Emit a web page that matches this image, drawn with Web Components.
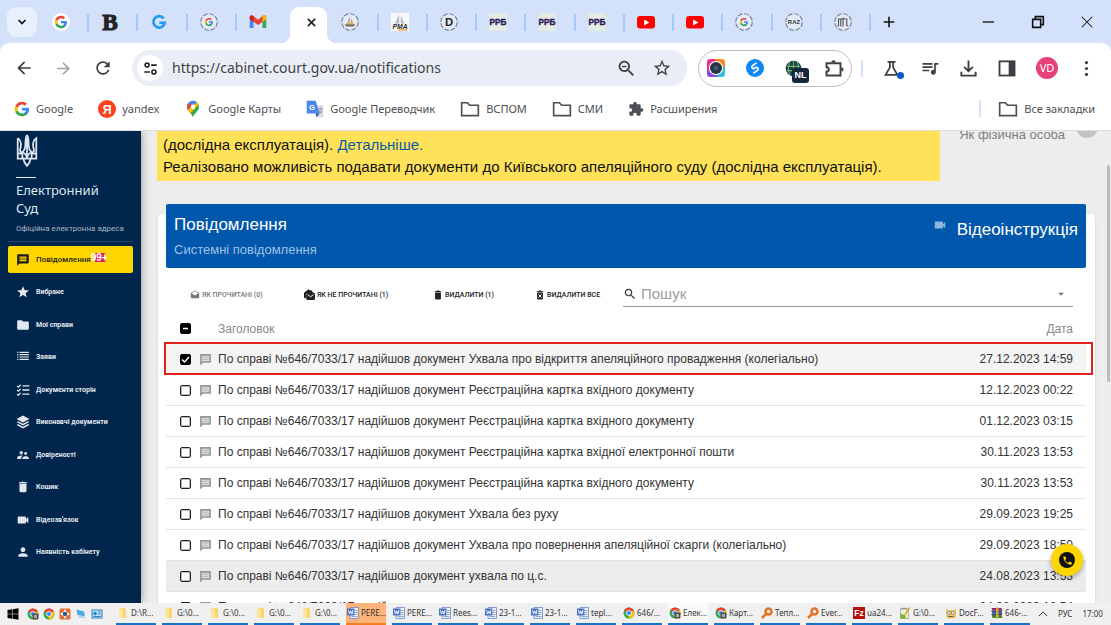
<!DOCTYPE html>
<html lang="uk">
<head>
<meta charset="utf-8">
<title>Електронний суд — Повідомлення</title>
<style>
  html, body { margin: 0; height: 100%; }
  body { display: flex; flex-direction: column; overflow: hidden; font-family: "Noto Sans", sans-serif; color: #3c4043; background: #d3e1fb; }
</style>
</head>
<body>
<browser-tabs></browser-tabs>
<browser-toolbar></browser-toolbar>
<bookmarks-bar></bookmarks-bar>
<court-app></court-app>
<task-bar></task-bar>

<script>
const p = (d, extra = '') => `<path d="${d}" ${extra}/>`;
const line = (d, w = 2) => `<path d="${d}" fill="none" stroke="currentColor" stroke-width="${w}"/>`;
const G = p('M22.56 12.25c0-.78-.07-1.53-.2-2.25H12v4.26h5.92c-.26 1.37-1.04 2.53-2.21 3.31v2.77h3.57c2.08-1.92 3.28-4.74 3.28-8.09z', 'fill="#4285f4"')
  + p('M12 23c2.97 0 5.46-.98 7.28-2.66l-3.57-2.77c-.98.66-2.23 1.06-3.71 1.06-2.86 0-5.29-1.93-6.16-4.53H2.18v2.84C3.99 20.53 7.7 23 12 23z', 'fill="#34a853"')
  + p('M5.84 14.09c-.22-.66-.35-1.36-.35-2.09s.13-1.43.35-2.09V7.07H2.18C1.43 8.55 1 10.22 1 12s.43 3.45 1.18 4.93l2.85-2.22.81-.62z', 'fill="#fbbc05"')
  + p('M12 5.38c1.62 0 3.06.56 4.21 1.64l3.15-3.15C17.45 2.09 14.97 1 12 1 7.7 1 3.99 3.47 2.18 7.07l3.66 2.84c.87-2.6 3.3-4.53 6.16-4.53z', 'fill="#ea4335"');
const ring = '<circle cx="12" cy="12" r="11" fill="#e4ebf7" stroke="#7c8594" stroke-width="1.6" stroke-dasharray="6.5 2.1"/>';
const label = (t, size, fill, font = 'Liberation Sans', y = 16, weight = 'bold', extra = '') => `<text x="12" y="${y}" text-anchor="middle" font-family="${font}, sans-serif" font-weight="${weight}" font-size="${size}" fill="${fill}" ${extra}>${t}</text>`;
const chrome = '<circle cx="12" cy="12" r="11" fill="#34a853"/><path d="M12 12 2.5 6.5A11 11 0 0 1 21.5 6.5z" fill="#ea4335"/><path d="M12 12 21.5 6.5A11 11 0 0 1 11 23z" fill="#fbbc05"/><circle cx="12" cy="12" r="5.5" fill="#fff"/><circle cx="12" cy="12" r="4.2" fill="#4285f4"/>';
const search = 'M15.5 14h-.79l-.28-.27C15.41 12.59 16 11.11 16 9.5 16 5.91 13.09 3 9.5 3S3 5.91 3 9.5 5.91 16 9.5 16c1.61 0 3.09-.59 4.23-1.57l.27.28v.79l5 4.99L20.49 19l-4.99-5zm-6 0C7.01 14 5 11.99 5 9.5S7.01 5 9.5 5 14 7.01 14 9.5 11.99 14 9.5 14z';
const drafts = 'M21.99 8c0-.72-.37-1.35-.94-1.7L12 1 2.95 6.3C2.38 6.65 2 7.28 2 8v10c0 1.1.9 2 2 2h16c1.1 0 2-.9 2-2l-.01-10zM12 13L3.74 7.84 12 3l8.26 4.84L12 13z';

const ICONS = {
  google: G,
  googleDisc: `<circle cx="12" cy="12" r="12" fill="#fff"/><g transform="translate(3 3) scale(.75)">${G}</g>`,
  googleRing: `${ring}<g transform="translate(6 6) scale(.5)">${G}</g>`,
  b: label('B', 31, '#222', 'Liberation Serif', 22, 'bold', 'stroke="#222" stroke-width="1.4"'),
  gBlue: '<path d="M18.200 7.300A7.600 7.600 0 1 0 19.600 13H12.500" fill="none" stroke="#1f9cf0" stroke-width="3.600"/>',
  gmail: '<path d="M1 20V5l5 4v11z" fill="#4285f4"/><path d="M18 20V9l5-4v15z" fill="#34a853"/><path d="M1 5.500C1 3 4 2.500 6 4l6 5 6-5c2-1.500 5-1 5 1.500V8l-11 8L1 8z" fill="#ea4335"/><path d="M18 4c2-1.500 5-1 5 1.500V8l-5 4z" fill="#fbbc05"/><path d="M1 8V5.500C1 4 3 3 4.500 3.300L6 5v7z" fill="#c5221f"/>',
  ship: `${ring}<path d="M5 15h14l-2 3H7z" fill="#666"/><path d="M12 4v9H8z" fill="#aab4bb"/><path d="M13 6l3 7h-3z" fill="#d69a66"/><path d="M7 14.500h10" stroke="#f08a1a" stroke-width="1.500"/>`,
  pma: '<path d="M0 0h24v24H0z" fill="#f8f8f8"/><path d="M11 2v12H5zM13 4l5 10h-5z" fill="#b8bcc4"/>' + label('PMA', 9, '#2b2b2b', 'Liberation Sans', 21, 'bold', 'font-style="italic"') + '<path d="M9 22.500h13" stroke="#e69b1c" stroke-width="1.500"/>',
  d: ring + label('D', 15, '#222', 'Liberation Sans', 17),
  rrb: '<path d="M0 0h24v24H0z" fill="#e3ebe3"/>' + label('РРБ', 11, '#2d1a5e', 'Liberation Sans', 16, 'bold', 'stroke="#2d1a5e" stroke-width=".5"'),
  youtube: '<rect x="0" y="4" width="24" height="16.500" rx="4" fill="#f00"/><path d="M9.500 8.500v8l7-4z" fill="#fff"/>',
  raz: ring + label('RAZ', 8, '#333', 'Liberation Sans', 15),
  itl: `${ring}<path d="M6 18V8h6M9 8v10M12 6v12M12 8h5v9h2" fill="none" stroke="#555" stroke-width="1.500"/>`,
  chevron: line('M5 8l7 7 7-7', 3.4),
  chevronUp: line('M2 17 12 7l10 10', 2.4),
  close: line('M4 4l16 16M20 4L4 20', 3.4),
  closeThin: line('M3 3l18 18M21 3L3 21', 1.8),
  minus: line('M4 12h17', 2),
  restore: line('M4 8h12v12H4zM8 8V4h12v12h-4', 2.4),
  plus: line('M12 4v16M4 12h16', 2.4),
  back: p('M20 11H7.83l5.59-5.59L12 4l-8 8 8 8 1.41-1.41L7.83 13H20v-2z'),
  forward: `<g transform="matrix(-1 0 0 1 24 0)">${p('M20 11H7.83l5.59-5.59L12 4l-8 8 8 8 1.41-1.41L7.83 13H20v-2z')}</g>`,
  reload: p('M17.65 6.35C16.2 4.9 14.21 4 12 4c-4.42 0-7.99 3.58-7.99 8s3.57 8 7.99 8c3.73 0 6.84-2.55 7.73-6h-2.08c-.82 2.33-3.04 4-5.65 4-3.31 0-6-2.69-6-6s2.69-6 6-6c1.66 0 3.14.69 4.22 1.78L13 11h7V4l-2.35 2.35z'),
  tune: '<g fill="none" stroke="currentColor" stroke-width="2.600"><circle cx="6.500" cy="6.500" r="3.200"/><path d="M13 6.500h9M2 17.500h9"/><circle cx="17.500" cy="17.500" r="3.200"/></g>',
  zoomOut: p(search) + p('M7 9h5v1.600H7z'),
  starLine: p('M22 9.24l-7.19-.62L12 2 9.19 8.63 2 9.24l5.46 4.73L5.82 21 12 17.27 18.18 21l-1.63-7.03L22 9.24zM12 15.4l-3.76 2.27 1-4.28-3.32-2.88 4.38-.38L12 6.1l1.71 4.04 4.38.38-3.32 2.88 1 4.28L12 15.4z'),
  camera: '<path d="M4 0h16a4 4 0 0 1 4 4v8H12z" fill="#f6891f"/><path d="M24 10v10a4 4 0 0 1-4 4h-8V12z" fill="#2bc4d8"/><path d="M14 24H4a4 4 0 0 1-4-4V12h12z" fill="#8a4be0"/><path d="M0 14V4a4 4 0 0 1 4-4h7l1 12z" fill="#ee2f8b"/><circle cx="12" cy="12" r="9.500" fill="#fff"/><circle cx="12" cy="12" r="8" fill="#2b3440"/><circle cx="12" cy="12" r="3" fill="#345b80"/>',
  shazam: '<circle cx="12" cy="12" r="12" fill="#0d86f7"/><path d="M13.500 5.500 8.500 9c-2 2 .500 5 3 3.500M10.500 18.500l5-3.500c2-2-.500-5-3-3.500l-1.500 1" fill="none" stroke="#fff" stroke-width="2.200" stroke-linecap="round"/>',
  globe: '<circle cx="12" cy="12" r="11" fill="#1c3a4a"/><path d="M3 9h18M3 15h18M12 1v22M7 3c-3 6-3 12 0 18M17 3c3 6 3 12 0 18" fill="none" stroke="#62bd6b" stroke-width="1.500"/>',
  puzzleLine: line('M4 6h16v14H4v-4.500c3.500 0 3.500-5 0-5z', 2.2) + p('M9.500 5a2.500 2.500 0 0 1 5 0zM21 10.500a2.500 2.500 0 0 1 0 5z'),
  flask: line('M7 3.500h10M10 3.500v7L4.500 20h15L14 10.500v-7', 2.2),
  music: p('M15 6H3v2h12V6zm0 4H3v2h12v-2zM3 16h8v-2H3v2zM17 6v8.18c-.31-.11-.65-.18-1-.18-1.66 0-3 1.34-3 3s1.34 3 3 3 3-1.34 3-3V8h3V6h-5z'),
  download: line('M12 2v13M6.500 10l5.500 5.500L17.500 10M3 16v5h18v-5', 2.4),
  panel: '<rect x="3" y="4" width="18" height="17" fill="none" stroke="currentColor" stroke-width="2.200"/><path d="M14 4h7v17h-7z"/>',
  dots: '<circle cx="12" cy="4.500" r="2"/><circle cx="12" cy="12" r="2"/><circle cx="12" cy="19.500" r="2"/>',
  yandex: '<circle cx="12" cy="12" r="12" fill="#fc3f1d"/>' + label('Я', 17, '#fff', 'Liberation Sans', 18),
  maps: '<path d="M12 1a8 8 0 0 0-8 8c0 6 6 8 8 14 2-6 8-8 8-14a8 8 0 0 0-8-8z" fill="#34a853"/><path d="M12 1a8 8 0 0 0-6.500 3.500L12 9l5-6c-1-1-3-2-5-2z" fill="#4285f4"/><path d="M5.500 4.500A8 8 0 0 0 5 13l7-6z" fill="#ea4335"/><path d="M5 13c1 2 2 3 3.500 5L19.500 6 17 3z" fill="#fbbc05"/><circle cx="12" cy="9" r="3" fill="#fff"/>',
  translate: '<path d="M10 7h13v16H14z" fill="#d6dbe3"/><path d="M1 1h12l5 17H1z" fill="#4a86e8"/><path d="M13 18h5l-4 5z" fill="#2a56b8"/><path d="M16 12h6M19 10v2M21 12c0 3-2 5-4 6M17 14c1 2 3 3 4 4" stroke="#77808f" fill="none"/>' + label('G', 10, '#fff', 'Liberation Sans', 13).replace('x="12"', 'x="8"'),
  folderLine: line('M2 4.500h7l2.500 3H22v12.500H2z', 2),
  puzzle: p('M20.5 11H19V7c0-1.1-.9-2-2-2h-4V3.5C13 2.12 11.88 1 10.5 1S8 2.12 8 3.5V5H4c-1.1 0-1.99.9-1.99 2v3.8H3.5c1.49 0 2.7 1.21 2.7 2.7s-1.21 2.7-2.7 2.7H2V20c0 1.1.9 2 2 2h3.8v-1.5c0-1.49 1.21-2.7 2.7-2.7 1.49 0 2.7 1.21 2.7 2.7V22H17c1.1 0 2-.9 2-2v-4h1.5c1.38 0 2.500-1.12 2.500-2.500S21.88 11 20.500 11z'),
  message: p('M20 2H4c-1.1 0-1.99.9-1.99 2L2 22l4-4h14c1.1 0 2-.9 2-2V4c0-1.1-.9-2-2-2zm-2 12H6v-2h12v2zm0-3H6V9h12v2zm0-3H6V6h12v2z'),
  comment: '<path d="M3.500 3.500h17v13h-14l-3 3z" fill="#d9d9d9" stroke="currentColor" stroke-width="3"/><path d="M6.500 8h11M6.500 12h11" stroke="#b5b5b5" stroke-width="1.500"/>',
  star: p('M12 17.27L18.18 21l-1.64-7.03L22 9.24l-7.19-.61L12 2 9.19 8.63 2 9.24l5.46 4.73L5.82 21z'),
  folder: p('M10 4H4c-1.1 0-1.99.9-1.99 2L2 18c0 1.1.9 2 2 2h16c1.1 0 2-.9 2-2V8c0-1.1-.9-2-2-2h-8l-2-2z'),
  list: p('M2 13h2v-2H2v2zm0 4h2v-2H2v2zm0-8h2V7H2v2zm4 4h16v-2H6v2zm0 4h16v-2H6v2zM6 7v2h16V7H6zM2 3h2v2H2zM6 3h16v2H6z'),
  checklist: line('M2 5l2 2 4-4M2 12l2 2 4-4M2 19l2 2 4-4M11 5h12M11 12h12M11 19h12', 2.2),
  layers: p('M12 1 1 7l11 6 11-6zM3.500 10.500 1 12l11 6 11-6-2.500-1.500L12 15.200zM3.500 15.500 1 17l11 6 11-6-2.500-1.500L12 20.200z'),
  people: p('M16.500 12a2.500 2.500 0 1 0 0-5 2.500 2.500 0 0 0 0 5zM9 11a3 3 0 1 0 0-6 3 3 0 0 0 0 6zm7.500 3c-1.830 0-5.500.920-5.500 2.750V19h11v-2.250c0-1.830-3.670-2.750-5.500-2.750zM9 13c-2.330 0-7 1.170-7 3.500V19h7v-2.250c0-.850.330-2.340 2.370-3.470C10.500 13.100 9.660 13 9 13z'),
  trash: p('M6 19c0 1.1.9 2 2 2h8c1.1 0 2-.9 2-2V7H6v12zM19 4h-3.5l-1-1h-5l-1 1H5v2h14V4z'),
  trashX: p('M5 21c0 1.100.900 2 2 2h10c1.100 0 2-.900 2-2V6H5zM20 3h-4l-1-2H9L8 3H4v2h16z') + '<path d="M8.500 10.500l7 8M15.500 10.500l-7 8" stroke="#fff" stroke-width="2.400"/>',
  trashBig: p('M5 21c0 1.100.900 2 2 2h10c1.100 0 2-.900 2-2V6H5zM20 3h-4l-1-2H9L8 3H4v2h16z'),
  video: p('M17 10.500V7c0-.55-.45-1-1-1H4c-.55 0-1 .45-1 1v10c0 .55.45 1 1 1h12c.55 0 1-.45 1-1v-3.500l4 4v-11l-4 4z'),
  person: p('M12 12c2.21 0 4-1.79 4-4s-1.79-4-4-4-4 1.79-4 4 1.79 4 4 4zm0 2c-2.67 0-8 1.34-8 4v2h16v-2c0-2.66-5.33-4-8-4z'),
  drafts: p(drafts),
  unread: p('M0 8 9 1l9 3v3L5 9v11H2c-1 0-2-1-2-2z') + p('M14 4 23 9.500c1 .500 1 1 1 2V22c0 1-1 2-2 2H7c-1 0-2-1-2-2V11.500c0-1 0-1.500 1-2z') + '<path d="M8 12l6.500 5 6.500-5" stroke="#fff" stroke-width="2" fill="none"/>',
  search: p(search),
  caret: p('M5 9h14l-7 7z'),
  phone: p('M6.62 10.79c1.44 2.83 3.76 5.14 6.59 6.59l2.2-2.2c.27-.27.67-.36 1.02-.24 1.12.37 2.33.57 3.57.57.55 0 1 .45 1 1V20c0 .55-.45 1-1 1-9.39 0-17-7.61-17-17 0-.55.45-1 1-1h3.5c.55 0 1 .45 1 1 0 1.25.2 2.45.57 3.57.11.35.03.74-.25 1.02l-2.2 2.2z'),
  windows: p('M1 4l9.500-1.500V11.500H1zM11.500 2.300 23 .500v11H11.500zM1 12.500h9.500v9L1 20zM11.500 12.500H23v11l-11.500-1.800z'),
  chrome,
  chromeUser: chrome + '<rect x="11" y="11" width="12" height="12" rx="2" fill="#4a4e52"/><path d="M14 14h6v6h-6z" fill="#aaa"/>',
  viewer: '<rect x="1" y="1" width="22" height="22" rx="3" fill="#e0703a"/><path d="M12 2l3 6 7 4-7 4-3 6-3-6-7-4 7-4z" fill="#fff"/><circle cx="12" cy="12" r="4.500" fill="#39567c"/>',
  monitor: '<path d="M3 3l15 4 2 10L5 14z" fill="#4fa9e6"/><path d="M5 14l15 3 2 4-14-1z" fill="#bcd3e6"/>',
  control: '<path d="M1 3h22v18H1z" fill="#2d7fc0"/><path d="M3 5h18v14H3z" fill="#bfe2f8"/><circle cx="8" cy="11" r="3.500" fill="#2d7fc0"/><path d="M14 8h5M14 12h5M5 17h14" stroke="#2d7fc0" stroke-width="2"/>',
  explorer: '<path d="M5 2h11l2 2v18H5z" fill="#f8d66d"/><path d="M5 2l7 3v18l-7-2z" fill="#fbe69d"/>',
  word: '<path d="M6 1h17v22H6z" fill="#eef3fb" stroke="#5f82c4" stroke-width="1.500"/><path d="M16 7h5M16 11h5M16 15h5M9 19h12" stroke="#6d8ecb" stroke-width="1.500"/><path d="M0 3h15v14H0z" fill="#4a74c0"/><path d="M3 6l2 8 2.500-6L10 14l2-8" fill="none" stroke="#fff" stroke-width="1.800"/>',
  key: '<circle cx="15" cy="9" r="6" fill="none" stroke="#e07424" stroke-width="5"/><path d="M11 13 2 22" stroke="#e07424" stroke-width="5"/>',
  filezilla: '<path d="M0 0h24v24H0z" fill="#b3100e"/>' + label('Fz', 17, '#fff', 'Liberation Sans', 18),
  notepad: '<path d="M3 4h16v19H3z" fill="#e9f3de" stroke="#777"/><path d="M3 23V13l10 4v6z" fill="#76b82a"/><path d="M21 1 12 16" stroke="#e1a325" stroke-width="3"/><path d="M5 3h12" stroke="#666" stroke-width="3" stroke-dasharray="2 2"/>',
  doc: '<path d="M2 3l5 3h10l5-3v17l-4 3H6l-4-3z" fill="#e5c777"/><path d="M5 9h5v5H5zM13 9h5v5h-5z" fill="#fff" stroke="#765527"/><path d="M7 19h10" stroke="#765527" stroke-width="2"/>',
  winrar: '<path d="M1 2h20l2 5H3z" fill="#8f2c65"/><path d="M1 8h20l2 6H3z" fill="#3d5fb4"/><path d="M1 15h20l2 7H3z" fill="#3e8a3b"/><path d="M1 8h21M1 15h21" stroke="#222" stroke-width="1.500"/><path d="M10 1h5v22h-5z" fill="#d6a33a"/>',
  trident: '<g fill="none" stroke="currentColor" stroke-width="1.700"><path d="M10 0c-2 3-1.300 7-1.700 11-.300 3-1.500 5-3.800 6M10 0c2 3 1.300 7 1.700 11 .300 3 1.500 5 3.800 6M10 3v20"/><path d="M1 3v20h5.500c.500 3 1.500 5 3.500 7 2-2 3-4 3.500-7H19V3c-2.800 2-3.500 5-3 8 .700 3 1.500 6-1 6-3 0-4.500 2-5 6-.500-4-2-6-5-6-2.500 0-1.700-3-1-6 .500-3-.200-6-3-8"/><path d="M1 18h4.500v5M19 18h-4.500v5M6.500 23h7"/></g>'
};

class UiElement extends HTMLElement {
  constructor() { super(); this.attachShadow({ mode: 'open' }); }
  connectedCallback() {
    this.shadowRoot.innerHTML = `<style>:host,*{box-sizing:border-box}button{font:inherit;color:inherit;border:0;background:none;padding:0;margin:0}a{color:inherit;text-decoration:none}${this.css()}</style>${this.html()}`;
  }
  css() { return ''; }
  html() { return ''; }
}

customElements.define('ui-icon', class extends UiElement {
  css() { const s = this.getAttribute('size') || 18; return `:host{display:block;flex:none;width:${s}px;height:${s}px}svg{display:block;width:100%;height:100%;fill:currentColor;overflow:visible}`; }
  html() { return `<svg viewBox="${this.getAttribute('box') || '0 0 24 24'}" aria-hidden="true">${ICONS[this.getAttribute('name')] || ''}</svg>`; }
});

customElements.define('browser-tab', class extends UiElement {
  css() { return `
    :host{display:flex;flex:1 1 0;min-width:0;height:43px;align-items:center;padding-left:12px;position:relative;color:#1f1f1f}
    :host(:not([active]):not([last-before]))::after{content:"";position:absolute;right:0;top:14px;width:2px;height:17px;background:#a8c7fa}
    :host([active]){padding-left:4px;padding-right:2px;align-items:flex-end}
    .shape{flex:1;height:36px;border-radius:9px 9px 0 0;background:#fff;display:flex;align-items:center;justify-content:center;padding:0 0 6px 6px;position:relative}
    .shape::before,.shape::after{content:"";position:absolute;bottom:0;width:9px;height:9px}
    .shape::before{left:-9px;background:radial-gradient(circle at 0 0,transparent 9px,#fff 9px)}
    .shape::after{right:-9px;background:radial-gradient(circle at 100% 0,transparent 9px,#fff 9px)}`; }
  html() {
    return this.hasAttribute('active')
      ? '<div class="shape"><button aria-label="Закрити вкладку"><ui-icon name="close" size="11"></ui-icon></button></div>'
      : `<ui-icon name="${this.getAttribute('icon')}" size="18"></ui-icon>`;
  }
});

customElements.define('browser-tabs', class extends UiElement {
  css() { return `
    :host{display:flex;flex:none;height:43px;background:#d3e1fb;color:#111}
    .menu{width:30px;height:30px;margin:7px 3px 0 7px;border-radius:9px;background:#e9f0fd;display:grid;place-items:center;flex:none}
    nav{flex:1;display:flex;min-width:0}
    .win{flex:none;width:240px;display:flex;align-items:center;height:43px}
    .win button:first-child{margin:0 83px 0 10px}.win button + button{margin-right:34px}`; }
  html() {
    const tabs = ['googleDisc', 'b', 'gBlue', 'googleRing', 'gmail', '', 'ship', 'pma', 'd', 'rrb', 'rrb', 'rrb', 'youtube', 'youtube', 'googleRing', 'raz', 'itl'];
    return `<button class="menu" aria-label="Пошук вкладок"><ui-icon name="chevron" size="12"></ui-icon></button>
      <nav>${tabs.map((t, i) => t ? `<browser-tab icon="${t}" ${i === 4 ? 'last-before' : ''}></browser-tab>` : '<browser-tab active></browser-tab>').join('')}</nav>
      <div class="win"><button aria-label="Нова вкладка"><ui-icon name="plus" size="16"></ui-icon></button><button aria-label="Згорнути"><ui-icon name="minus" size="16"></ui-icon></button><button aria-label="Розгорнути"><ui-icon name="restore" size="16"></ui-icon></button><button aria-label="Закрити"><ui-icon name="closeThin" size="14"></ui-icon></button></div>`;
  }
});

customElements.define('browser-toolbar', class extends UiElement {
  css() { return `
    :host{display:flex;flex:none;align-items:center;height:50px;padding:0 15px 0 14px;background:#fff;border-radius:9px 9px 0 0;color:#3c3f43}
    .nav{display:flex;gap:20px;flex:none;margin-right:19px}
    .nav button:nth-child(2){color:#a0a2a5}
    .box{flex:1;min-width:0;height:36px;border-radius:18px;background:#e9edf6;display:flex;align-items:center;padding:0 15px 0 5px}
    .site{width:26px;height:26px;border-radius:50%;background:#fff;display:grid;place-items:center;margin-right:9px;flex:none;color:#222}
    input{flex:1;min-width:0;border:0;background:none;padding:0;font:14px/20px "Noto Sans",sans-serif;color:#3f4246;outline:0}
    .box input ~ button{margin-left:15px}
    .ext{flex:none;display:flex;align-items:center;justify-content:space-between;width:154px;height:37px;border:1px solid #bcbec2;border-radius:19px;margin:0 9px 0 11px;padding:0 7px 0 8px}
    .nl{position:relative}.nl span{position:absolute;left:7px;top:8px;width:17px;height:15px;border-radius:3px;background:#17263d;color:#fff;font:bold 9px/15px "Liberation Sans",sans-serif;text-align:center}
    .sep{width:2px;height:17px;background:#d3e1fb;flex:none}
    .tools{flex:none;display:flex;align-items:center;justify-content:space-between;width:214px;margin-left:19px}
    .lab{position:relative}.lab::after{content:"";position:absolute;right:-3px;bottom:-1px;width:7px;height:7px;border-radius:50%;background:#0b57d0}
    .me{width:22px;height:22px;border-radius:50%;background:#e8407a;color:#fff;font:11px/22px "Noto Sans",sans-serif;text-align:center}`; }
  html() {
    const b = (n, l, s = 20, c = '') => `<button class="${c}" aria-label="${l}"><ui-icon name="${n}" size="${s}"></ui-icon></button>`;
    return `<div class="nav">${b('back', 'Назад', 20)}${b('forward', 'Вперед', 19)}${b('reload', 'Оновити', 20)}</div>
      <div class="box">${b('tune', 'Відомості про сайт', 15, 'site')}<input aria-label="Адреса" value="https://cabinet.court.gov.ua/notifications">${b('zoomOut', 'Масштаб', 21)}${b('starLine', 'Додати закладку', 20)}</div>
      <div class="ext">${b('camera', 'Камера', 18)}${b('shazam', 'Shazam', 18)}<button class="nl" aria-label="VPN"><ui-icon name="globe" size="17"></ui-icon><span>NL</span></button>${b('puzzleLine', 'Розширення', 21)}</div>
      <div class="sep"></div>
      <div class="tools">${b('flask', 'Експерименти', 19, 'lab')}${b('music', 'Медіа', 20)}${b('download', 'Завантаження', 19)}${b('panel', 'Бічна панель', 20)}<button class="me">VD</button>${b('dots', 'Меню', 19)}</div>`;
  }
});

customElements.define('bookmark-link', class extends UiElement {
  css() { return ':host{display:block;flex:none}a{display:flex;align-items:center;gap:6px;height:20px;font:11px/20px "Noto Sans",sans-serif;color:#4c4f54;white-space:nowrap}'; }
  html() { return `<a href="#"><ui-icon name="${this.getAttribute('icon')}" size="${this.getAttribute('size') || 18}"></ui-icon><slot></slot></a>`; }
});

customElements.define('bookmarks-bar', class extends UiElement {
  css() { return `
    :host{display:flex;flex:none;align-items:center;height:38px;padding:0 16px 6px 14px;background:#fff;border-bottom:1px solid #dcdcdc}
    nav{display:flex;gap:25px;flex:1}
    .sep{width:2px;height:17px;background:#d3e1fb;margin-right:17px}`; }
  html() {
    return `<nav><bookmark-link icon="google" size="16">Google</bookmark-link><bookmark-link icon="yandex">yandex</bookmark-link><bookmark-link icon="maps">Google Карты</bookmark-link><bookmark-link icon="translate">Google Переводчик</bookmark-link><bookmark-link icon="folderLine" size="20">ВСПОМ</bookmark-link><bookmark-link icon="folderLine" size="20">СМИ</bookmark-link><bookmark-link icon="puzzle" size="16">Расширения</bookmark-link></nav><div class="sep"></div><bookmark-link icon="folderLine" size="20">Все закладки</bookmark-link>`;
  }
});

customElements.define('side-link', class extends UiElement {
  css() { return `
    :host{display:block}
    a{display:flex;align-items:center;height:27px;border-radius:2px;padding-left:8px;gap:6px;color:#e2e7ee;font:700 7px/12px Roboto,sans-serif;white-space:nowrap}
    :host([active]) a{background:#ffd500;color:#1c1c1c;font-size:8px;font-weight:500}
    ::slotted(b){align-self:flex-start;margin:7px 0 0 -6px;color:#fff;background:linear-gradient(90deg,#e5195f00 4px,#e5195f 4px 14px,#e5195f00 14px);font:bold 10px/9px "Liberation Sans",sans-serif}`; }
  html() { return `<a href="#"><ui-icon name="${this.getAttribute('icon')}" size="14"></ui-icon><span><slot></slot></span><slot name="badge"></slot></a>`; }
});

customElements.define('side-menu', class extends UiElement {
  css() { return `
    :host{display:block;flex:none;width:141px;background:#00264d;color:#dfe6ee;box-shadow:0 0 9px #0006;position:relative;z-index:1;padding:4px 8px 0}
    header{padding:0 8px}
    .rule{width:20px;height:1px;background:#dfe6ee;margin:10px 0 3px}
    header ui-icon{margin-left:-5px}
    h1{margin:0;font:13px/18px "Noto Sans",sans-serif}
    p{margin:5px 0 0;font:8px/14px Roboto,sans-serif;color:#a9b6c5;white-space:nowrap}
    nav{margin-top:4px;height:320px;display:flex;flex-direction:column;justify-content:space-between}
    hr{border:0;border-top:1px solid #24456a;margin:5px 0 0}`; }
  html() {
    const rest = [['star', 'Вибране'], ['folder', 'Мої справи'], ['list', 'Заяви'], ['checklist', 'Документи сторін'], ['layers', 'Виконавчі документи'], ['people', 'Довіреності'], ['trash', 'Кошик'], ['video', "Відеозв'язок"], ['person', 'Наявність кабінету']];
    return `<header><ui-icon name="trident" box="-5 0 30 31" size="32"></ui-icon><div class="rule"></div><h1>Електронний<br>Суд</h1><p>Офіційна електронна адреса</p></header><hr>
      <nav><side-link icon="message" active>Повідомлення<b slot="badge">99+</b></side-link>${rest.map(([i, t]) => `<side-link icon="${i}">${t}</side-link>`).join('')}</nav>`;
  }
});

customElements.define('notice-toolbar', class extends UiElement {
  css() { return `
    :host{display:grid;grid-template-columns:114px 129px 102px 88px 1fr;height:37px;margin:8px 22px 0 32px;align-items:center}
    button{display:flex;align-items:center;gap:2px;font:500 7px/12px Roboto,sans-serif;color:#222;white-space:nowrap}
    button:disabled{color:#777}
    label{display:flex;align-items:center;gap:4px;height:25px;border-bottom:1px solid #999;color:#333;padding-right:7px}
    input{flex:1;min-width:0;border:0;padding:0;outline:0;background:none;font:15px/20px "Liberation Sans",sans-serif}
    input::placeholder{color:#9e9e9e}
    label ui-icon:last-child{color:#777}`; }
  html() {
    return `<button disabled><ui-icon name="drafts" size="10"></ui-icon>ЯК ПРОЧИТАНІ (0)</button><button><ui-icon name="unread" size="11"></ui-icon>ЯК НЕ ПРОЧИТАНІ (1)</button><button><ui-icon name="trashBig" size="10"></ui-icon>ВИДАЛИТИ (1)</button><button><ui-icon name="trashX" size="10"></ui-icon>ВИДАЛИТИ ВСЕ</button>
      <label><ui-icon name="search" size="14"></ui-icon><input aria-label="Пошук" placeholder="Пошук"><ui-icon name="caret" size="10"></ui-icon></label>`;
  }
});

customElements.define('notice-table', class extends UiElement {
  css() { return `
    :host{display:block;margin:0 9px 0 8px}
    table{width:100%;border-collapse:separate;border-spacing:0;table-layout:fixed;font:12px/16px "Liberation Sans",sans-serif;color:#333}
    .c{width:33px}.i{width:19px}.d{width:130px}
    th{font-weight:400;color:#888;text-align:left;height:31px}
    td{height:31px;border-bottom:1px solid #e4e4e4}
    td,th{padding:0;white-space:nowrap}
    td:first-child,th:first-child{padding-left:14px}
    td:last-child,th:last-child{text-align:right;padding-right:13px}
    input{appearance:none;display:block;margin:0;width:11px;height:11px;border:1px solid #222;box-shadow:inset 0 0 0 1px #0004;border-radius:2px;background:#fff}
    input:checked,input.some{background:#000;border-color:#000}
    .tick{display:grid;width:11px}.tick > *{grid-area:1/1}.tick svg{display:none;width:11px;height:11px;fill:none;stroke:#fff;stroke-width:1.500}
    input:checked + svg,input.some + svg{display:block}
    td ui-icon{color:#979797}
    .on td{background:#f4f4f4}.hover td{background:#ececec}
    .on{position:relative}
    .on td:last-child::after{content:"";position:absolute;inset:-2px -7px 0 -2px;border:2px solid #e2201c}`; }
  html() {
    const s = 'По справі №646/7033/17 надійшов документ ';
    const rows = [['Ухвала про відкриття апеляційного провадження (колегіально)', '27.12.2023 14:59', 'on'], ['Реєстраційна картка вхідного документу', '12.12.2023 00:22'], ['Реєстраційна картка вхідного документу', '01.12.2023 03:15'], ['Реєстраційна картка вхідної електронної пошти', '30.11.2023 13:53'], ['Реєстраційна картка вхідного документу', '30.11.2023 13:53'], ['Ухвала без руху', '29.09.2023 19:25'], ['Ухвала про повернення апеляційної скарги (колегіально)', '29.09.2023 18:50'], ['ухвала по ц.с.', '24.08.2023 13:53', 'hover'], ['ухвала по ц.с.', '24.08.2023 12:54']];
    const box = (on, l, cls = '') => `<span class="tick"><input type="checkbox" aria-label="${l}" class="${cls}" ${on ? 'checked' : ''}><svg viewBox="0 0 11 11"><path d="${cls ? 'M3 5.500h5' : 'M2 5.500l2.500 2.500L9 3'}"/></svg></span>`;
    return `<table><colgroup><col class="c"><col class="i"><col><col class="d"></colgroup><thead><tr><th>${box(false, 'Вибрати всі', 'some')}</th><th></th><th>Заголовок</th><th>Дата</th></tr></thead><tbody>${rows.map(([t, d, c]) => `<tr class="${c || ''}"><td>${box(c === 'on', d)}</td><td><ui-icon name="comment" size="13"></ui-icon></td><td>${s}${t}</td><td>${d}</td></tr>`).join('')}</tbody></table>`;
  }
});

customElements.define('notice-card', class extends UiElement {
  css() { return `
    :host{display:block;background:#fff;margin:33px 16px 0 1px;border-radius:3px 3px 0 0;box-shadow:0 1px 3px #0002}
    header{display:flex;justify-content:space-between;height:64px;background:#0057ab;color:#fff;border-radius:2px;margin:0 9px -10px 8px;position:relative;top:-10px;padding:9px 8px;font-family:"Liberation Sans",sans-serif}
    h2{margin:0;font:17px/24px "Liberation Sans",sans-serif}
    p{margin:4px 0 0;font:13px/18px "Liberation Sans",sans-serif;color:#9fc2e6}
    a{display:flex;gap:10px;font:17px/24px "Liberation Sans",sans-serif;padding-top:5px}
    a ui-icon{color:#8fb6de}`; }
  html() {
    return `<header><div><h2>Повідомлення</h2><p>Системні повідомлення</p></div><a href="#"><ui-icon name="video" size="14"></ui-icon>Відеоінструкція</a></header><notice-toolbar></notice-toolbar><notice-table></notice-table>`;
  }
});

customElements.define('court-app', class extends UiElement {
  css() { return `
    :host{display:flex;flex:1;min-height:0;overflow:hidden;position:relative;background:#ededed}
    main{flex:1;min-width:0;padding-left:16px;font-family:"Liberation Sans",sans-serif}
    .top{display:flex;align-items:flex-start}
    .note{flex:1;background:#ffe25a;color:#111;font:15px/22px "Liberation Sans",sans-serif;padding:3px 6px}
    .note p{margin:0}.note a{color:#0b5ca8}
    .user{flex:none;width:171px;display:flex;justify-content:flex-end;gap:11px;padding-right:13px;color:#808080;font-size:13px;line-height:16px;white-space:nowrap}
    .user span{margin-top:-4px}.user i{width:22px;height:22px;border-radius:50%;background:#c2c2c2;margin-top:-15px}
    .bar{position:absolute;right:1px;top:34px;width:3px;height:217px;background:#bdbdbd;border-radius:2px}
    .call{position:absolute;right:28px;bottom:27px;width:32px;height:32px;border-radius:50%;background:#ffd500;box-shadow:0 2px 5px #0005;display:grid;place-items:center}
    .call span{width:16px;height:16px;border-radius:50%;background:#111;color:#ffd500;display:grid;place-items:center}`; }
  html() {
    return `<side-menu></side-menu><main><div class="top"><div class="note"><p>(дослідна експлуатація). <a href="#">Детальніше.</a></p><p>Реалізовано можливість подавати документи до Київського апеляційного суду (дослідна експлуатація).</p></div><div class="user"><span>Як фізична особа</span><i></i></div></div><notice-card></notice-card></main>
      <div class="bar"></div><button class="call" aria-label="Зателефонувати"><span><ui-icon name="phone" size="11"></ui-icon></span></button>`;
  }
});

customElements.define('task-button', class extends UiElement {
  css() { return `
    :host{display:block;flex:1 1 0;min-width:0}
    button{display:flex;align-items:center;gap:2px;width:calc(100% - 6px);height:22px;padding-left:1px;border-bottom:2px solid #1874c6;font:8px/14px "Noto Sans",sans-serif;color:#333;white-space:nowrap}
    :host([lit]) button{background:#fafafa}
    :host([active]) button{background:#ffb27a;border-color:#f57c1f}`; }
  html() { return `<button><ui-icon name="${this.getAttribute('icon')}" size="12"></ui-icon><slot></slot></button>`; }
});

customElements.define('task-bar', class extends UiElement {
  css() { return `
    :host{display:flex;flex:none;align-items:center;height:22px;background:#f0f0f0;color:#333;font:8px/14px "Noto Sans",sans-serif;position:relative;z-index:1}
    .start{color:#000;margin:0 8px 0 7px}
    .quick{display:flex;gap:4px;width:89px;flex:none}
    nav{flex:1;display:flex;min-width:0}
    .tray{flex:none;display:flex;align-items:center;width:75px;gap:10px;padding-left:2px;white-space:nowrap}`; }
  html() {
    const t = [['explorer', 'D:\\R...'], ['explorer', 'G:\\0...'], ['explorer', 'G:\\0...'], ['explorer', 'G:\\0...'], ['explorer', 'G:\\0...'], ['word', 'PERE...', 'active'], ['word', 'PERE...'], ['word', 'Rees...'], ['word', '23-1...'], ['word', '23-1...'], ['word', 'tepl...'], ['chrome', '646/...'], ['chromeUser', 'Елек...', 'lit'], ['chromeUser', 'Карт...'], ['key', 'Тепл...'], ['key', 'Ever...'], ['filezilla', 'ua24...'], ['notepad', 'G:\\0...'], ['doc', 'DocF...'], ['winrar', '646-...']];
    return `<button class="start" aria-label="Пуск"><ui-icon name="windows" size="12"></ui-icon></button><div class="quick">${['chromeUser', 'chrome', 'viewer', 'monitor', 'control'].map(n => `<ui-icon name="${n}" size="12"></ui-icon>`).join('')}</div>
      <nav>${t.map(([i, l, a]) => `<task-button icon="${i}" ${a || ''}>${l}</task-button>`).join('')}</nav>
      <div class="tray"><ui-icon name="chevronUp" size="10"></ui-icon><span>РУС</span><span>17:00</span></div>`;
  }
});
</script>
</body>
</html>
